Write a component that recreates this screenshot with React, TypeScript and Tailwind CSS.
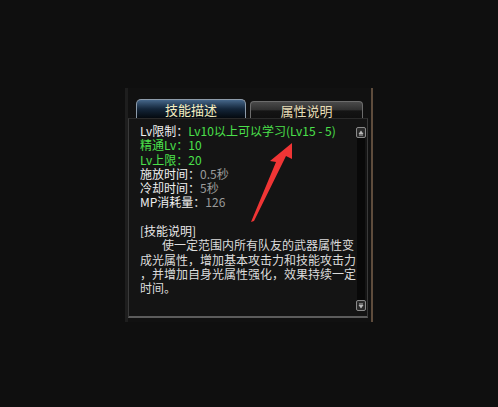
const FONT = "font-['Noto_Sans_CJK_SC','Noto_Sans',sans-serif]";
const LINE = 'flex h-[14.3px] items-center whitespace-nowrap';

function ScrollButton({ up }: { up?: boolean }) {
  return (
    <div className="flex h-[11px] w-[10px] items-center justify-center rounded-[2px] border border-[#8a8a8a] bg-[#2a2a2a]">
      <svg width="6" height="6" viewBox="0 0 6 6">
        {up ? (
          <path d="M3 0.5 L5.5 4 L0.5 4 Z M1 4.5 H5 V5.5 H1 Z" fill="#b8b8b8" />
        ) : (
          <path d="M1 0.5 H5 V1.5 H1 Z M0.5 2 L5.5 2 L3 5.5 Z" fill="#b8b8b8" />
        )}
      </svg>
    </div>
  );
}

function Row({ label, value, green }: { label: string; value: string; green?: boolean }) {
  return (
    <div className={LINE}>
      <span className={green ? 'text-[#4be04b]' : 'text-[#f0f0f0]'}>{label}</span>
      <span className={green ? 'text-[#4be04b]' : 'text-[#e8e8e8]'}>：</span>
      <span className={green ? 'text-[#4be04b]' : 'text-[#9a9a9a]'}>{value}</span>
    </div>
  );
}

export default function App() {
  return (
    <div className={`relative h-[407px] w-[498px] overflow-hidden bg-[#0f0f0f] ${FONT}`}>
      <div className="pl-[125px] pt-[88px]">
        <div className="flex h-[234px] w-[248px] flex-col border-l-[3px] border-r-[2px] border-l-[#1e1e1e] border-r-[#5e4c3c] bg-[#111111]">
          <div className="mt-[11px] flex items-end gap-[4px] pl-[8px]">
            <div className="flex h-[19px] w-[110px] items-center justify-center rounded-t-[5px] border border-b-0 border-[#8d9baa] bg-gradient-to-b from-[#46678a] via-[#14263a] to-[#050a10] text-[13px] leading-none text-[#f6efc0]">
              技能描述
            </div>
            <div className="flex h-[17px] w-[113px] items-center justify-center rounded-t-[4px] border border-b-0 border-[#6c6c6c] bg-[linear-gradient(to_bottom,#4a4a4a_0%,#303030_50%,#141414_55%,#101010_100%)] text-[13px] leading-none text-[#e6dcb6]">
              属性说明
            </div>
          </div>
          <div className="mr-[3px] flex h-[200px] border-x border-b-2 border-t border-x-[#3a3a3a] border-b-[#5c5c5c] border-t-[#2a2a2a] bg-[#141414]">
            <div className="flex-1 pl-[11px] pt-[5px] text-[12px] leading-[14.3px]">
              <div className={LINE}>
                <span className="text-[#f0f0f0]">Lv限制：</span>
                <span className="text-[#4be04b]">Lv10以上可以学习(Lv15 - 5)</span>
              </div>
              <Row label="精通Lv" value="10" green />
              <Row label="Lv上限" value="20" green />
              <Row label="施放时间" value="0.5秒" />
              <Row label="冷却时间" value="5秒" />
              <Row label="MP消耗量" value="126" />
              <div className="h-[14.3px]" />
              <div className={`${LINE} text-[#e8e8e8]`}>[技能说明]</div>
              <div className="text-[#dcdcdc]">
                <div className={`${LINE} pl-[22px]`}>使一定范围内所有队友的武器属性变</div>
                <div className={LINE}>成光属性，增加基本攻击力和技能攻击力</div>
                <div className={LINE}>，并增加自身光属性强化，效果持续一定</div>
                <div className={LINE}>时间。</div>
              </div>
            </div>
            <div className="mr-[2px] flex w-[10px] flex-col items-center justify-between pb-[5px] pt-[8px]">
              <ScrollButton up />
              <div className="w-[8px] flex-1 bg-[#080808]" />
              <ScrollButton />
            </div>
          </div>
        </div>
      </div>
      <svg className="absolute left-0 top-0" width="498" height="407" viewBox="0 0 498 407">
        <polygon
          points="292,143 292,159 286,156 254,221 251,222 276,162 270,161"
          fill="#f03535"
        />
      </svg>
    </div>
  );
}
